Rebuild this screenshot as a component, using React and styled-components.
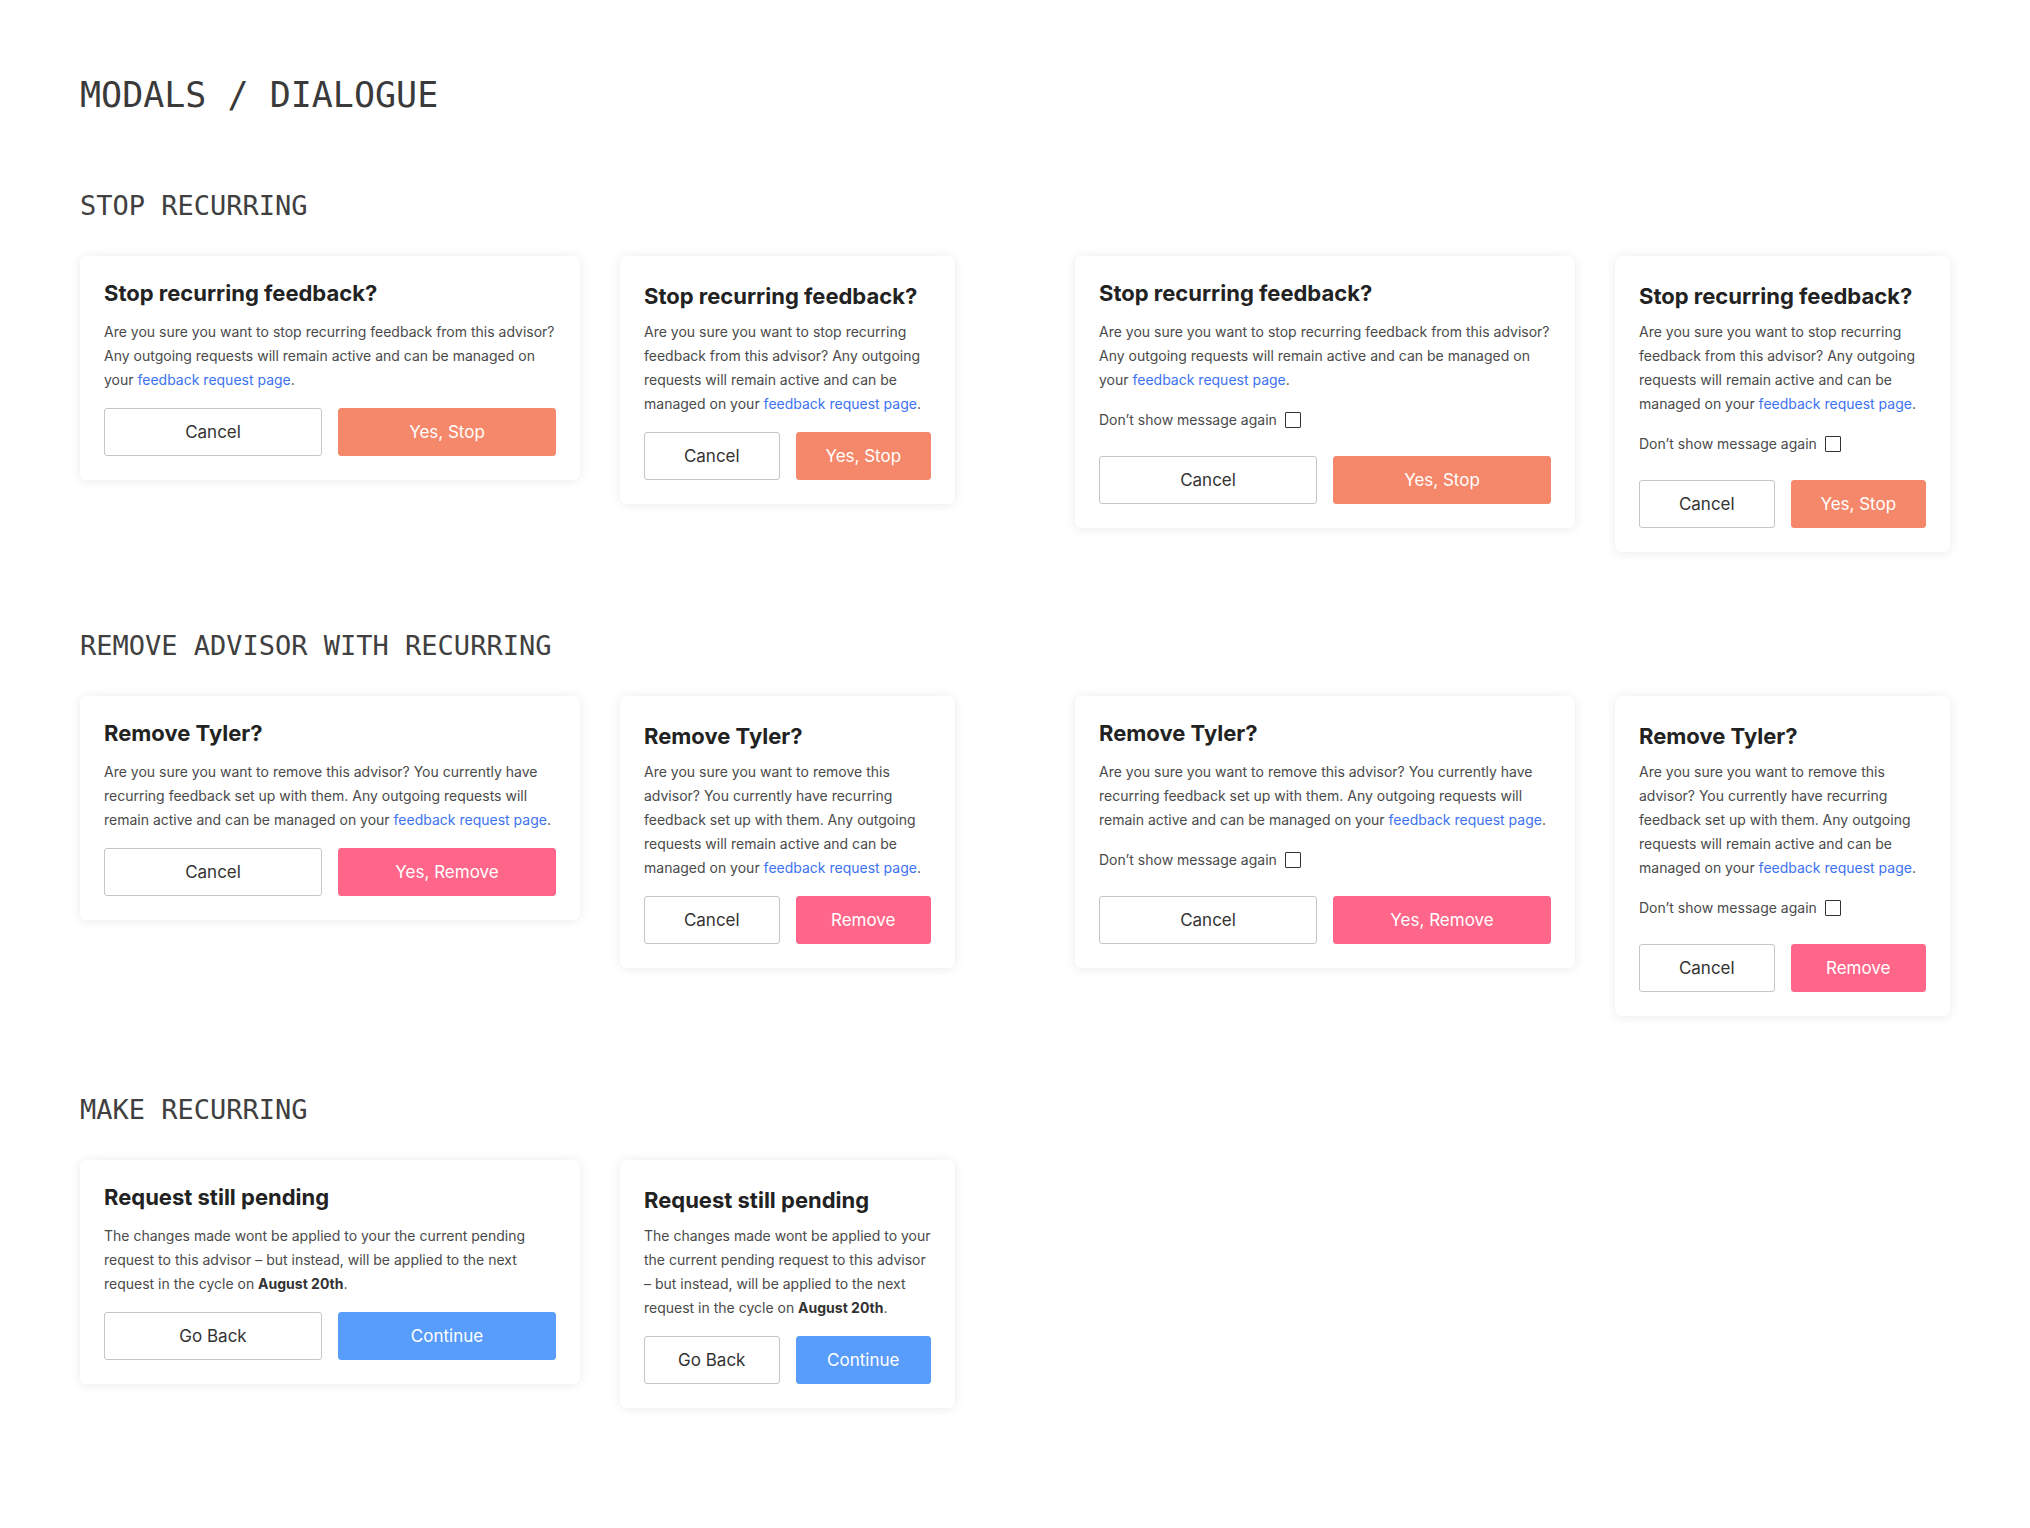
import React from 'react'
import styled, { createGlobalStyle } from 'styled-components'

const GlobalStyle = createGlobalStyle`
  body {
    margin: 0;
    background: #ffffff;
    font-family: Inter, "Noto Sans", sans-serif;
    -webkit-font-smoothing: antialiased;
  }
`

const BUTTON_COLORS = {
  stop: '#f5886a',
  remove: '#ff668a',
  continue: '#589cfc',
}

const Page = styled.main`
  padding: 74px 80px 120px;
  min-height: 1528px;
  box-sizing: border-box;
`

const PageTitle = styled.h1`
  margin: 0;
  font-family: "DejaVu Sans Mono", "Liberation Mono", monospace;
  font-weight: 400;
  font-size: 35px;
  line-height: 42px;
  color: #3a3a3a;
`

const Section = styled.section`
  margin-top: 78px;

  &:first-of-type {
    margin-top: 74px;
  }
`

const SectionTitle = styled.h2`
  margin: 0 0 34px;
  font-family: "DejaVu Sans Mono", "Liberation Mono", monospace;
  font-weight: 400;
  font-size: 27px;
  line-height: 32px;
  color: #404040;
`

const CardRow = styled.div`
  display: flex;
  align-items: flex-start;
  gap: 120px;
`

const CardPair = styled.div`
  display: flex;
  align-items: flex-start;
  gap: 40px;
`

const Card = styled.div`
  width: ${p => (p.$wide ? 500 : 335)}px;
  box-sizing: border-box;
  padding: ${p => (p.$wide ? '23px 24px 24px' : '26px 24px 24px')};
  background: #ffffff;
  border-radius: 6px;
  box-shadow: 0 1px 12px rgba(0, 0, 0, 0.08), 0 0 2px rgba(0, 0, 0, 0.03);
  display: flex;
  flex-direction: column;
`

const Title = styled.h3`
  margin: 0 0 ${p => (p.$wide ? 13 : 10)}px;
  font-size: 22px;
  line-height: 28px;
  font-weight: 700;
  color: #222222;
`

const Body = styled.p`
  margin: 0;
  font-size: 14px;
  line-height: 24px;
  color: #4a4a4a;

  a {
    color: #3d72f2;
    text-decoration: none;
  }

  b {
    font-weight: 700;
    color: #333333;
  }
`

const CheckRow = styled.label`
  margin-top: 16px;
  display: flex;
  align-items: center;
  gap: 8px;
  font-size: 14px;
  line-height: 24px;
  color: #4a4a4a;
`

const Box = styled.span`
  width: 16px;
  height: 16px;
  box-sizing: border-box;
  border: 1.5px solid #333333;
  border-radius: 1px;
`

const Actions = styled.div`
  margin-top: ${p => (p.$afterCheck ? 24 : 16)}px;
  display: grid;
  grid-template-columns: 1fr 1fr;
  gap: 16px;
`

const Button = styled.button`
  height: 48px;
  border-radius: 3px;
  font-family: Inter, "Noto Sans", sans-serif;
  font-size: 17px;
  font-weight: 400;
  cursor: pointer;
  border: 1px solid ${p => (p.$kind ? BUTTON_COLORS[p.$kind] : '#c6c6c6')};
  background: ${p => (p.$kind ? BUTTON_COLORS[p.$kind] : '#ffffff')};
  color: ${p => (p.$kind ? '#ffffff' : '#333333')};
`

const Link = () => <a href="#">feedback request page</a>

const Modal = ({ wide, title, children, check, cancel, confirm, kind }) => (
  <Card $wide={wide}>
    <Title $wide={wide}>{title}</Title>
    <Body>{children}</Body>
    {check && (
      <CheckRow>
        Don’t show message again
        <Box />
      </CheckRow>
    )}
    <Actions $afterCheck={check}>
      <Button>{cancel}</Button>
      <Button $kind={kind}>{confirm}</Button>
    </Actions>
  </Card>
)

const stopText = (
  <>
    Are you sure you want to stop recurring feedback from this advisor? Any
    outgoing requests will remain active and can be managed on your <Link />.
  </>
)

const removeText = (
  <>
    Are you sure you want to remove this advisor? You currently have recurring
    feedback set up with them. Any outgoing requests will remain active and can
    be managed on your <Link />.
  </>
)

const pendingText = (
  <>
    The changes made wont be applied to your the current pending request to
    this advisor – but instead, will be applied to the next request in the
    cycle on <b>August 20th</b>.
  </>
)

export default function App() {
  return (
    <>
      <GlobalStyle />
      <Page>
        <PageTitle>MODALS / DIALOGUE</PageTitle>

        <Section>
          <SectionTitle>STOP RECURRING</SectionTitle>
          <CardRow>
            <CardPair>
              <Modal wide title="Stop recurring feedback?" cancel="Cancel" confirm="Yes, Stop" kind="stop">
                {stopText}
              </Modal>
              <Modal title="Stop recurring feedback?" cancel="Cancel" confirm="Yes, Stop" kind="stop">
                {stopText}
              </Modal>
            </CardPair>
            <CardPair>
              <Modal wide check title="Stop recurring feedback?" cancel="Cancel" confirm="Yes, Stop" kind="stop">
                {stopText}
              </Modal>
              <Modal check title="Stop recurring feedback?" cancel="Cancel" confirm="Yes, Stop" kind="stop">
                {stopText}
              </Modal>
            </CardPair>
          </CardRow>
        </Section>

        <Section>
          <SectionTitle>REMOVE ADVISOR WITH RECURRING</SectionTitle>
          <CardRow>
            <CardPair>
              <Modal wide title="Remove Tyler?" cancel="Cancel" confirm="Yes, Remove" kind="remove">
                {removeText}
              </Modal>
              <Modal title="Remove Tyler?" cancel="Cancel" confirm="Remove" kind="remove">
                {removeText}
              </Modal>
            </CardPair>
            <CardPair>
              <Modal wide check title="Remove Tyler?" cancel="Cancel" confirm="Yes, Remove" kind="remove">
                {removeText}
              </Modal>
              <Modal check title="Remove Tyler?" cancel="Cancel" confirm="Remove" kind="remove">
                {removeText}
              </Modal>
            </CardPair>
          </CardRow>
        </Section>

        <Section>
          <SectionTitle>MAKE RECURRING</SectionTitle>
          <CardRow>
            <CardPair>
              <Modal wide title="Request still pending" cancel="Go Back" confirm="Continue" kind="continue">
                {pendingText}
              </Modal>
              <Modal title="Request still pending" cancel="Go Back" confirm="Continue" kind="continue">
                {pendingText}
              </Modal>
            </CardPair>
          </CardRow>
        </Section>
      </Page>
    </>
  )
}
